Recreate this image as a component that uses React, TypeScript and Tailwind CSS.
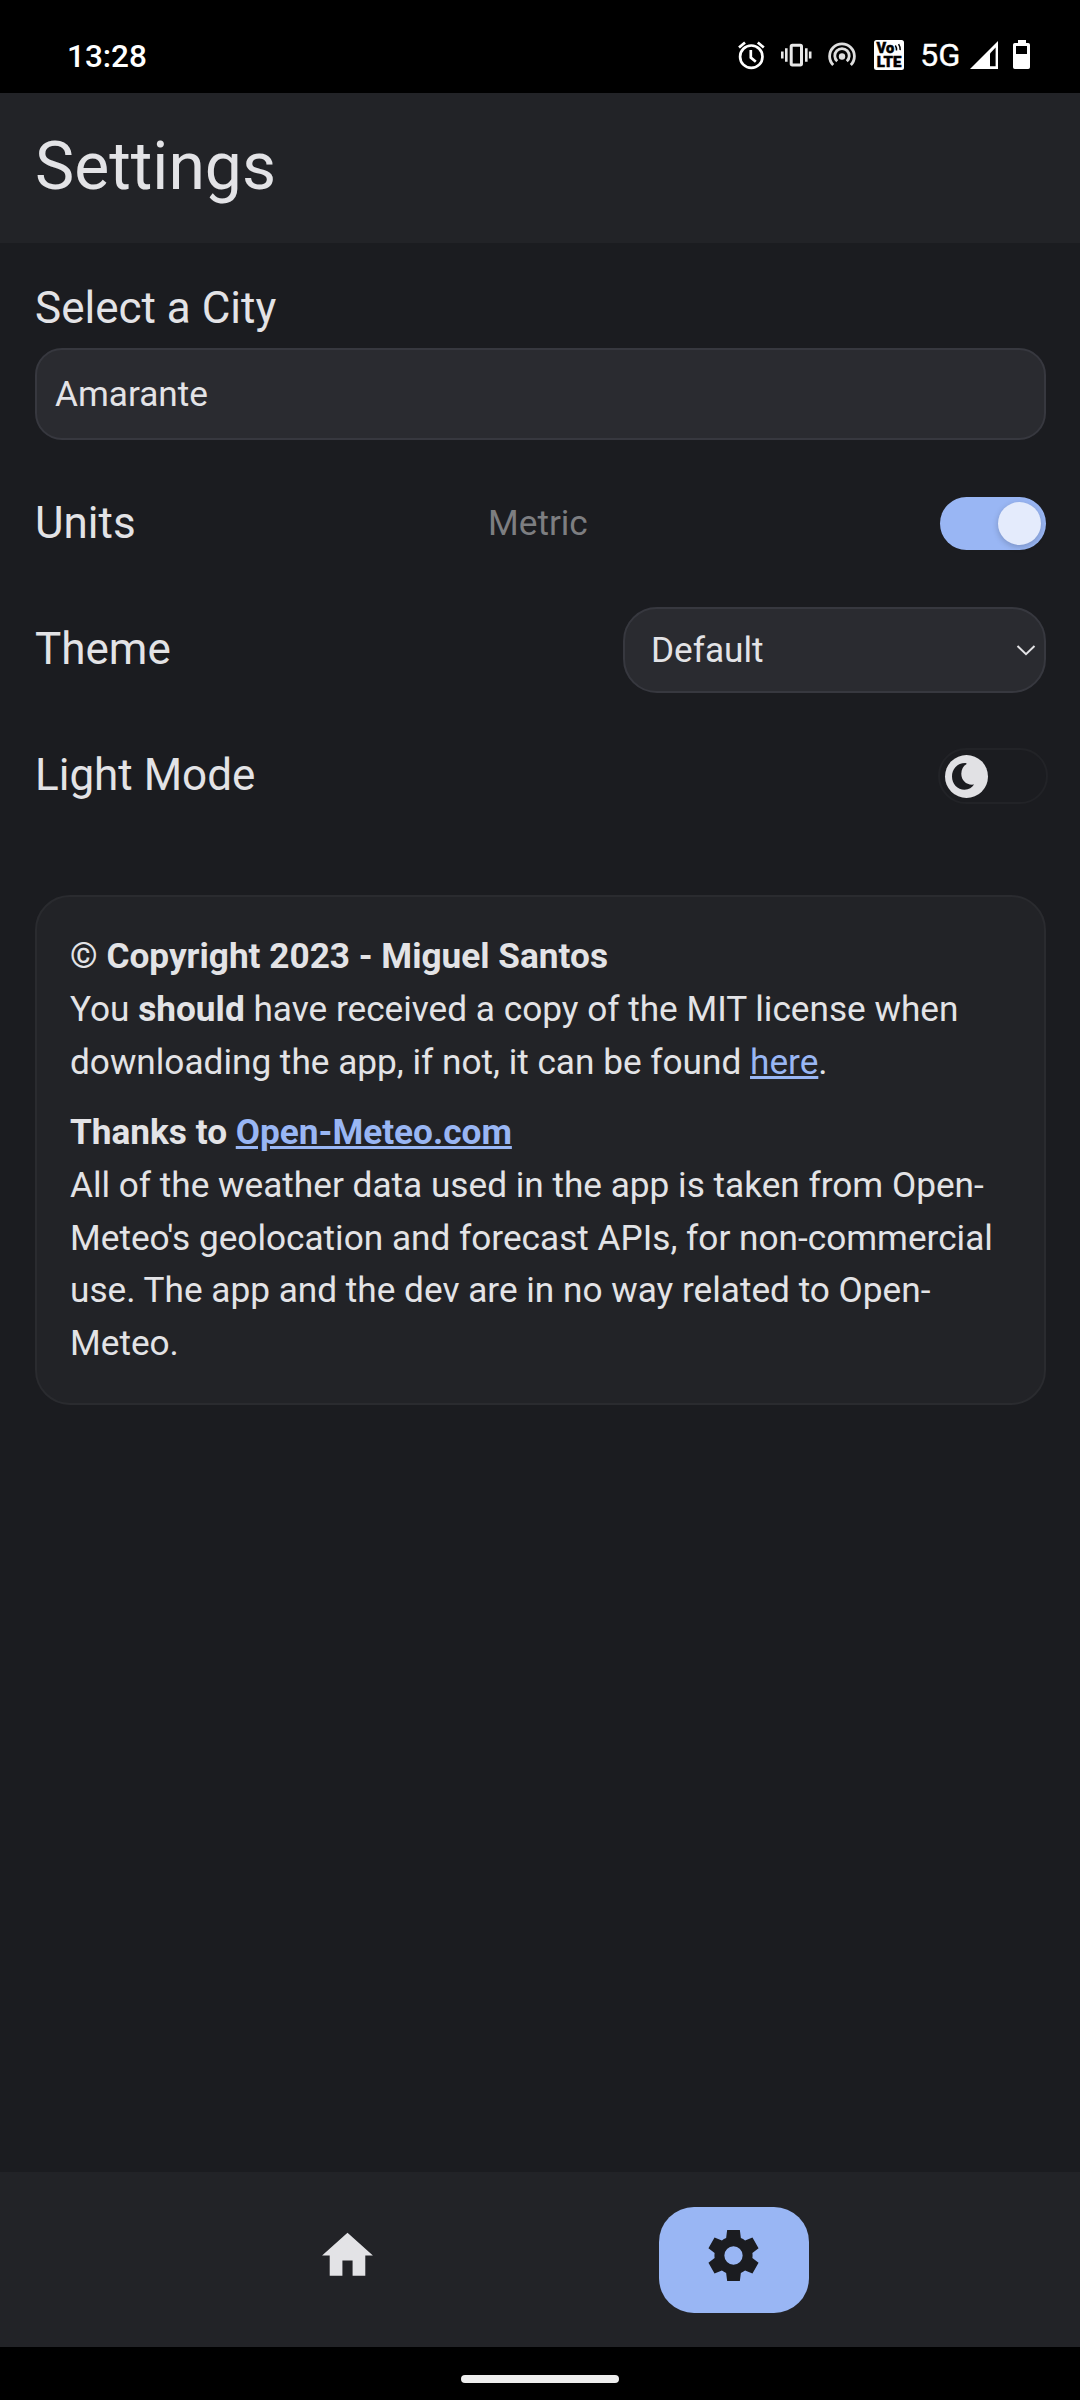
import React from "react";

function StatusIcons() {
  return (
    <svg width="340" height="80" viewBox="0 0 340 80" fill="none" className="block text-white">
      <g stroke="#fff" strokeWidth="2.7">
        <circle cx="31.3" cy="36.7" r="11.2" />
        <path d="M30.8 30v7.5l5 4.2M19 27.5l6-5M43.8 27.5l-6-5" />
      </g>
      <g stroke="#e8e8e8" strokeWidth="2.6">
        <rect x="71.2" y="25.300" width="10.3" height="19.600" rx="1.2" strokeWidth="3" />
        <path d="M66.3 28.300v13.5M62.3 31.5v7M86.3 28.300v13.5M90.2 31.5v7" />
      </g>
      <g stroke="#dedede" strokeWidth="2.8">
        <path d="M113.2 45a12.4 12.4 0 1 1 17.6 0" />
        <path d="M117.2 41.2a7.2 7.2 0 1 1 9.6 0" />
        <circle cx="122" cy="36.5" r="3.2" fill="#dedede" stroke="none" />
      </g>
      <rect x="154" y="20" width="30" height="30" rx="2.5" fill="#fff" />
      <text x="156.600" y="33.4" fontFamily="Roboto" fontWeight="900" fontSize="14" fill="#000" stroke="#000" strokeWidth="0.5" textLength="17.5" lengthAdjust="spacingAndGlyphs">Vo</text>
      <text x="156.800" y="46.700" fontFamily="Roboto" fontWeight="900" fontSize="14.5" fill="#000" stroke="#000" strokeWidth="0.5" textLength="24.5" lengthAdjust="spacingAndGlyphs">LTE</text>
      <path d="M175.3 25.5q1.6 2.4 1.2 5M178.6 24.2q2 3.2 1.6 6" stroke="#000" strokeWidth="1.5" />
      <text x="200" y="45.5" fontFamily="Roboto" fontSize="31" fill="#fff" stroke="#fff" strokeWidth="0.3" textLength="40.5" lengthAdjust="spacingAndGlyphs">5G</text>
      <path d="M250 49 278 21v28z" fill="#fff" />
      <path d="M270 33.5 275.6 27.6V46.3H270z" fill="#000" />
      <path d="M298 20h8v3h2.2a1.8 1.8 0 0 1 1.8 1.8v22.4a1.8 1.8 0 0 1-1.8 1.8h-13.4a1.8 1.8 0 0 1-1.8-1.8V24.800a1.8 1.8 0 0 1 1.8-1.8h3.200z" fill="#fff" />
      <rect x="296" y="26" width="11" height="8" fill="#000" />
    </svg>
  );
}

function Row({ label, children }: { label: string; children: React.ReactNode }) {
  return (
    <div className="flex h-[126px] items-center justify-between">
      <span className="text-[44px] leading-[52px]">{label}</span>
      {children}
    </div>
  );
}

export default function App() {
  return (
    <div className="flex h-[2400px] w-[1080px] flex-col overflow-hidden bg-[#1b1c20] font-[Roboto,sans-serif] text-[#e3e3e6]">
      <div className="flex h-[93px] shrink-0 justify-between bg-black pl-[67px] text-white">
        <span className="pt-[39px] text-[31.500px] leading-[36px] font-medium">13:28</span>
        <div className="mr-[20px] pt-[20px]">
          <StatusIcons />
        </div>
      </div>

      <header className="flex h-[150px] shrink-0 items-center bg-[#222327] pb-[3px] pl-[35px]">
        <h1 className="text-[66px] leading-[78px]">Settings</h1>
      </header>

      <main className="flex grow flex-col pt-[39px] pr-[34px] pl-[35px]">
        <label className="text-[44px] leading-[52px]">Select a City</label>
        <div className="mt-[14px] flex h-[92px] shrink-0 items-center rounded-[27px] border-2 border-[#37383f] bg-[#2a2b30] pl-[18px] text-[35.2px] leading-[42px]">
          Amarante
        </div>

        <div className="mt-[20px] flex flex-col">
          <div className="relative">
            <Row label="Units">
              <div className="flex h-[53px] w-[106px] items-center justify-end rounded-full bg-[#99b6f4] pr-[5px]">
                <div className="h-[43px] w-[43px] rounded-full bg-[#e4ebfc] shadow-[0_2px_6px_rgba(0,0,0,0.2)]" />
              </div>
            </Row>
            <span className="absolute top-[42px] left-[453px] text-[35.2px] leading-[42px] text-[#7d7e81]">Metric</span>
          </div>
          <Row label="Theme">
            <div className="mt-[2px] flex h-[86px] w-[423px] items-center justify-between rounded-[34px] border-2 border-[#37383f] bg-[#2a2b30] pr-[8px] pl-[26px] text-[35.2px] leading-[42px]">
              Default
              <svg width="20" height="12" viewBox="0 0 20 12" fill="none" stroke="#e3e3e6" strokeWidth="2">
                <path d="M1.500 2 10 10.200 18.500 2" />
              </svg>
            </div>
          </Row>
          <Row label="Light Mode">
            <div className="mt-[2px] -mr-[2px] flex h-[56px] w-[110px] items-center rounded-full border-2 border-[#222327] pl-[5px]">
              <div className="flex h-[43px] w-[43px] items-center justify-center rounded-full bg-[#e1e1e4]">
                <svg width="43" height="43" viewBox="0 0 43 43">
                  <path
                    d="M20.500 8C12.500 7.800 7 14 7 21.500C7 29 12.500 34.700 19.500 34.700C24 34.700 27.200 32.500 29 29.500C22 30.500 16.300 26 16.300 18.800C16.300 14.500 18.300 11 21.300 9.300C22 8.800 21.500 8 20.500 8z"
                    fill="#1b1c20"
                  />
                </svg>
              </div>
            </div>
          </Row>
        </div>

        <section className="mt-[57px] rounded-[35px] border-2 border-[#2a2b2f] bg-[#222327] px-[33px] py-[33px] text-[35.2px] leading-[52.8px]">
          <p>
            <b>© Copyright 2023 - Miguel Santos</b>
            <br />
            You <b>should</b> have received a copy of the MIT license when downloading the app, if not, it can be found{" "}
            <a className="text-[#99b6f4] underline">here</a>.
          </p>
          <p className="mt-[17.600px]">
            <b>
              Thanks to <a className="text-[#99b6f4] underline">Open-Meteo.com</a>
            </b>
            <br />
            All of the weather data used in the app is taken from Open-Meteo's geolocation and forecast APIs, for
            non-commercial use. The app and the dev are in no way related to Open-Meteo.
          </p>
        </section>
      </main>

      <nav className="flex h-[175px] shrink-0 items-start justify-center gap-[236px] bg-[#222327] pt-[35px] pl-px">
        <div className="flex h-[106px] w-[150px] items-start justify-center pt-[18px]">
          <svg width="61" height="61" viewBox="0 0 24 24" fill="#e3e3e6">
            <path d="M10 20v-6h4v6h5v-8h3L12 3 2 12h3v8z" />
          </svg>
        </div>
        <div className="flex h-[106px] w-[150px] items-start justify-center rounded-[35px] bg-[#99b6f4] pt-[18px]">
          <svg width="61" height="61" viewBox="0 0 24 24" fill="#1b1c20">
            <path
              fillRule="evenodd"
              d="M9.500 2h5l.4 3.100c.6.240 1.150.560 1.660.960l2.900-1.160 2.400 4.250-2.430 1.900c.04.300.07.620.07.950s-.03.650-.07.950l2.430 1.900-2.400 4.250-2.900-1.160c-.510.400-1.060.720-1.660.960L14.500 22h-5l-.4-3.100c-.6-.240-1.150-.560-1.660-.960l-2.900 1.160-2.400-4.250 2.430-1.900c-.04-.300-.07-.620-.07-.950s.03-.650.07-.950l-2.430-1.900 2.400-4.250 2.900 1.160c.510-.400 1.060-.720 1.660-.960zM12 8.400a3.600 3.600 0 1 0 0 7.200 3.600 3.600 0 0 0 0-7.200z"
            />
          </svg>
        </div>
      </nav>
      <div className="flex h-[53px] shrink-0 items-start justify-center bg-black pt-[28px]">
        <div className="h-[8px] w-[158px] rounded-full bg-[#eee]" />
      </div>
    </div>
  );
}
